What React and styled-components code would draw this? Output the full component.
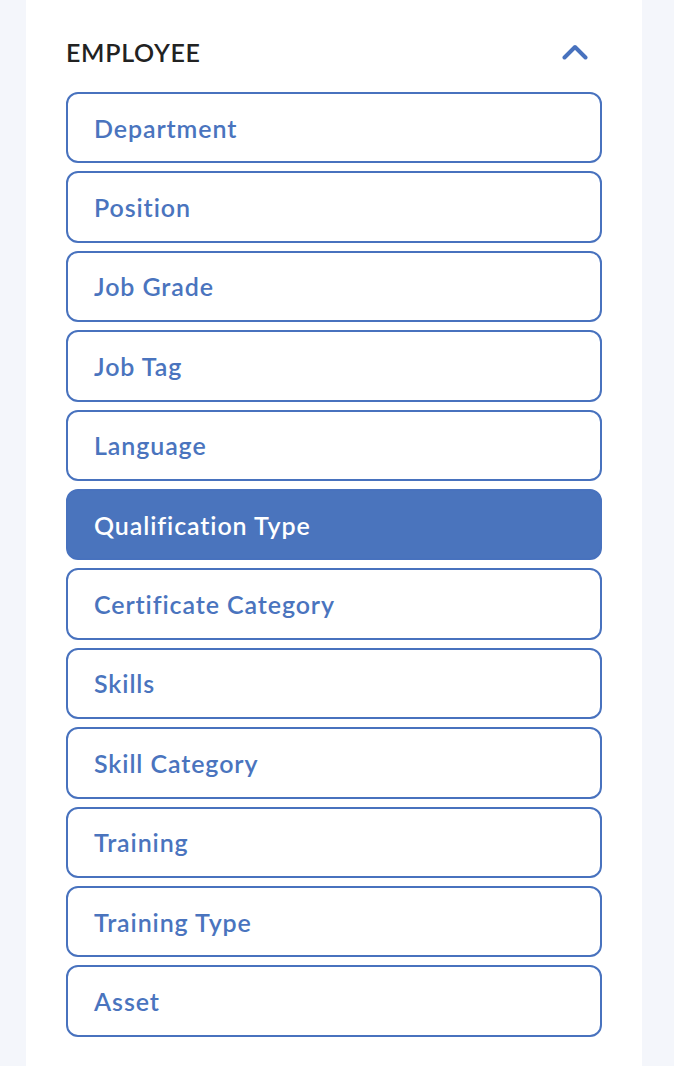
import React from "react";
import styled, { createGlobalStyle } from "styled-components";

const Global = createGlobalStyle`
  html, body { margin: 0; padding: 0; background: #f4f6fb; }
  body { font-family: Lato, "Noto Sans", sans-serif; }
  * { box-sizing: border-box; }
`;

const Page = styled.div`
  min-height: 1066px;
  padding-left: 26px;
  display: flex;
`;

const Panel = styled.section`
  width: 616px;
  min-height: 1066px;
  background: #ffffff;
  padding: 32px 40px 0 40px;
`;

const Header = styled.div`
  height: 40px;
  display: flex;
  align-items: center;
  justify-content: space-between;
  margin-bottom: 20px;
  padding-right: 14px;
`;

const Title = styled.h2`
  margin: 0;
  font-family: Lato, sans-serif;
  font-size: 25px;
  font-weight: 600;
  letter-spacing: 0.7px;
  color: #222222;
`;

const Toggle = styled.button`
  border: 0;
  background: none;
  padding: 0;
  display: flex;
  color: #4872be;
  cursor: pointer;
`;

const List = styled.div`
  display: flex;
  flex-direction: column;
  gap: 8px;
`;

const Item = styled.button`
  height: 71.4px;
  width: 100%;
  display: flex;
  align-items: center;
  padding: 0 26px;
  border: 2px solid #4872be;
  border-radius: 12px;
  background: ${(p) => (p.$active ? "#4a74bd" : "#ffffff")};
  color: ${(p) => (p.$active ? "#ffffff" : "#4a74be")};
  font-family: Lato, sans-serif;
  font-size: 25px;
  font-weight: 600;
  letter-spacing: 0.9px;
  text-align: left;
  cursor: pointer;
`;

const items = [
  "Department",
  "Position",
  "Job Grade",
  "Job Tag",
  "Language",
  "Qualification Type",
  "Certificate Category",
  "Skills",
  "Skill Category",
  "Training",
  "Training Type",
  "Asset",
];

export default function App() {
  return (
    <>
      <Global />
      <Page>
        <Panel>
          <Header>
            <Title>EMPLOYEE</Title>
            <Toggle aria-label="Collapse">
              <svg width="26" height="16" viewBox="0 0 26 16" fill="none">
                <path
                  d="M2.5 13.5 L13 3 L23.5 13.5"
                  stroke="currentColor"
                  strokeWidth="4"
                  strokeLinecap="round"
                  strokeLinejoin="round"
                />
              </svg>
            </Toggle>
          </Header>
          <List>
            {items.map((it) => (
              <Item key={it} $active={it === "Qualification Type"}>
                {it}
              </Item>
            ))}
          </List>
        </Panel>
      </Page>
    </>
  );
}
